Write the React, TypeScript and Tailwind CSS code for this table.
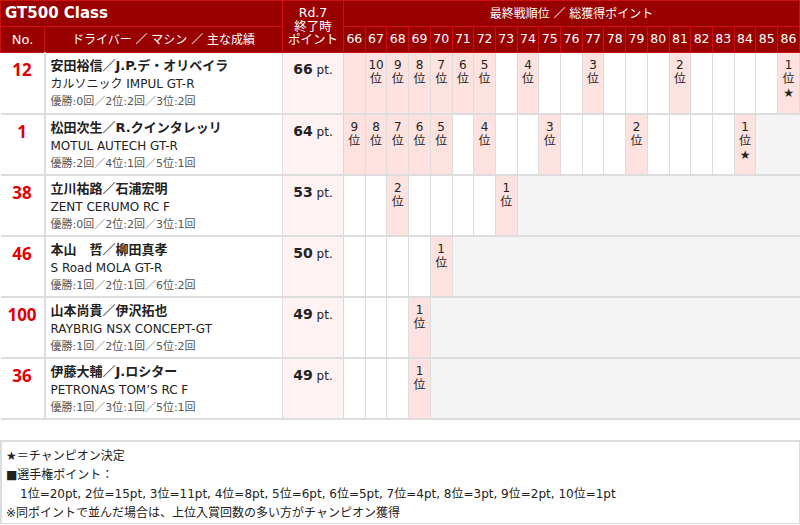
type Cell = { rank?: string; star?: boolean; pink?: boolean } | null

type Entry = {
  no: string
  name: string
  car: string
  record: string
  pts: string
  cells: Cell[]
  open: number
}

const races = Array.from({ length: 21 }, (_, i) => String(66 + i))

const W: Cell = {}
const P = (rank: string, star = false): Cell => ({ rank, star, pink: true })

const entries: Entry[] = [
  {
    no: '12',
    name: '安田裕信／J.P.デ・オリベイラ',
    car: 'カルソニック IMPUL GT-R',
    record: '優勝:0回／2位:2回／3位:2回',
    pts: '66',
    open: 21,
    cells: [
      { pink: true }, P('10'), P('9'), P('8'), P('7'), P('6'), P('5'), W, P('4'), W, W, P('3'), W, W, W,
      P('2'), W, W, W, W, P('1', true),
    ],
  },
  {
    no: '1',
    name: '松田次生／R.クインタレッリ',
    car: 'MOTUL AUTECH GT-R',
    record: '優勝:2回／4位:1回／5位:1回',
    pts: '64',
    open: 19,
    cells: [
      P('9'), P('8'), P('7'), P('6'), P('5'), W, P('4'), W, W, P('3'), W, W, W, P('2'), W, W, W, W,
      P('1', true),
    ],
  },
  {
    no: '38',
    name: '立川祐路／石浦宏明',
    car: 'ZENT CERUMO RC F',
    record: '優勝:0回／2位:2回／3位:1回',
    pts: '53',
    open: 8,
    cells: [W, W, P('2'), W, W, W, W, P('1')],
  },
  {
    no: '46',
    name: '本山　哲／柳田真孝',
    car: 'S Road MOLA GT-R',
    record: '優勝:1回／2位:1回／6位:2回',
    pts: '50',
    open: 5,
    cells: [W, W, W, W, P('1')],
  },
  {
    no: '100',
    name: '山本尚貴／伊沢拓也',
    car: 'RAYBRIG NSX CONCEPT-GT',
    record: '優勝:1回／2位:1回／5位:2回',
    pts: '49',
    open: 4,
    cells: [W, W, W, P('1')],
  },
  {
    no: '36',
    name: '伊藤大輔／J.ロシター',
    car: 'PETRONAS TOM’S RC F',
    record: '優勝:1回／3位:1回／5位:1回',
    pts: '49',
    open: 4,
    cells: [W, W, W, P('1')],
  },
]

const font = { fontFamily: '"DejaVu Sans", "Noto Sans CJK JP", sans-serif' }

export default function App() {
  return (
    <div className="w-[800px] bg-white text-[#222]" style={font}>
      <table className="w-[800px] table-fixed border-collapse">
        <colgroup>
          <col className="w-[44px]" />
          <col className="w-[238px]" />
          <col className="w-[61px]" />
          {races.map((r) => (
            <col key={r} />
          ))}
        </colgroup>
        <thead className="bg-[#990000] text-white">
          <tr className="h-[26px]">
            <th colSpan={2} className="border border-[#cc1111] px-1 text-left text-[15px] font-bold">
              GT500 Class
            </th>
            <th rowSpan={2} className="border border-[#cc1111] text-[12.5px] font-normal leading-[13.5px]">
              Rd.7
              <br />
              終了時
              <br />
              ポイント
            </th>
            <th colSpan={21} className="border border-[#cc1111] text-[12px] font-normal">
              最終戦順位 ／ 総獲得ポイント
            </th>
          </tr>
          <tr className="h-[26px]">
            <th className="border border-[#cc1111] text-[13px] font-normal">No.</th>
            <th className="border border-[#cc1111] text-[12px] font-normal">ドライバー ／ マシン ／ 主な成績</th>
            {races.map((r) => (
              <th key={r} className="border border-[#cc1111] p-0 text-[12.5px] font-normal">
                {r}
              </th>
            ))}
          </tr>
        </thead>
        <tbody>
          {entries.map((e) => (
            <tr key={e.no} className="h-[61px] border-b-2 border-[#dddddd]">
              <td
                className="border-r-2 border-[#dddddd] pt-[5px] text-center align-top text-[17px] leading-[24px] font-bold text-[#e00000]"
                style={{ fontFamily: '"Noto Sans", sans-serif' }}
              >
                {e.no}
              </td>
              <td className="border-r border-[#dddddd] pl-[5px] pt-1 align-top">
                <div className="text-[13px] font-bold leading-[18px]">{e.name}</div>
                <div className="text-[12px] leading-[18px]">{e.car}</div>
                <div className="text-[11px] leading-[17px] text-[#555]">{e.record}</div>
              </td>
              <td className="border-x border-[#ecd0d0] bg-[#fff2f2] pt-1 text-center align-top">
                <span className="text-[14px] font-bold">{e.pts}</span>
                <span className="text-[12px]"> pt.</span>
              </td>
              {e.cells.map((c, i) => (
                <td
                  key={i}
                  className={`border-r border-[#dddddd] p-0 pt-[5px] text-center align-top text-[12px] leading-[14px] ${
                    c?.pink ? 'bg-[#fde2e0]' : 'bg-white'
                  }`}
                >
                  {c?.rank && (
                    <>
                      {c.rank}
                      <br />位
                    </>
                  )}
                  {c?.star && (
                    <>
                      <br />★
                    </>
                  )}
                </td>
              ))}
              {e.open < 21 && <td colSpan={21 - e.open} className="bg-[#f4f4f4]" />}
            </tr>
          ))}
        </tbody>
      </table>

      <div className="mt-5 h-[84px] border-2 border-r border-b border-[#dddddd] px-1 pt-[5px] text-[12px] leading-[19px] text-[#222]">
        <div>★＝チャンピオン決定</div>
        <div>■選手権ポイント：</div>
        <div className="pl-[14px]">
          1位=20pt, 2位=15pt, 3位=11pt, 4位=8pt, 5位=6pt, 6位=5pt, 7位=4pt, 8位=3pt, 9位=2pt, 10位=1pt
        </div>
        <div>※同ポイントで並んだ場合は、上位入賞回数の多い方がチャンピオン獲得</div>
      </div>
    </div>
  )
}
